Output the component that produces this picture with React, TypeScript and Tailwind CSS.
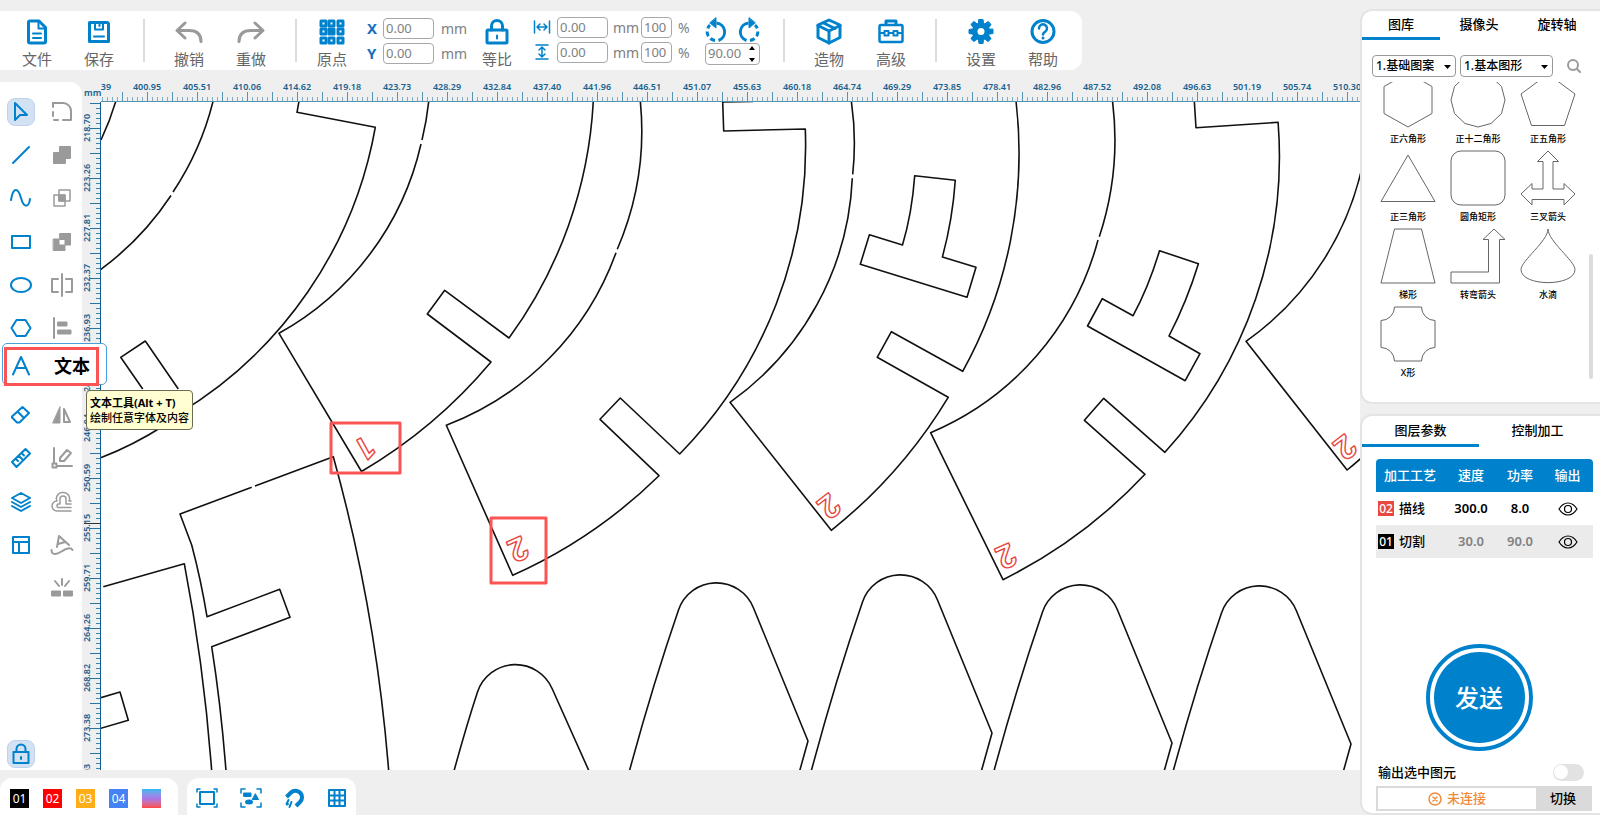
import React from 'react';

interface IconProps {
    w: number;
    h: number;
    children: React.ReactNode;
    stroke?: number;
    className?: string;
}

function Icon({ w, h, children, stroke = 2, className = 'text-[#0081cc]' }: IconProps) {
    return (
        <svg
            width={w}
            height={h}
            viewBox={`0 0 ${w} ${h}`}
            fill="none"
            stroke="currentColor"
            strokeWidth={stroke}
            strokeLinecap="round"
            strokeLinejoin="round"
            aria-hidden="true"
            className={`shrink-0 ${className}`}
        >
            {children}
        </svg>
    );
}

const gray = 'text-[#9a9a9a]';

/* ---------- top bar icons ---------- */

const fileIcon = (
    <Icon w={22} h={26} stroke={3}>
        <path d="M3.5 2h9.5l6.5 6.5V22.5a1.5 1.5 0 0 1-1.5 1.5H4a1.5 1.5 0 0 1-1.5-1.5V3.5A1.5 1.5 0 0 1 4 2z" />
        <path d="M12.5 3v6.5h6" strokeWidth={2} />
        <path d="M7 14.5h8M7 19h8" strokeWidth={2} />
    </Icon>
);
const saveIcon = (
    <Icon w={24} h={24} stroke={3}>
        <path d="M2.5 2.5h18l1 1v18h-19z" />
        <path d="M8 3v6.5h8V3M12.5 3v3" strokeWidth={2} />
        <path d="M7 16.5h10" strokeWidth={2} />
    </Icon>
);
const undoIcon = (
    <Icon w={28} h={22} stroke={3} className={gray}>
        <path d="M10 2 2 9.500l8 7.500M3 9.500h11c8 0 12 4 12 11" />
    </Icon>
);
const redoIcon = (
    <Icon w={28} h={22} stroke={3} className={gray}>
        <path d="m18 2 8 7.500-8 7.500M25 9.500H14c-8 0-12 4-12 11" />
    </Icon>
);
const originIcon = (
    <Icon w={26} h={26} stroke={3}>
        {[2, 10, 19].map((y) =>
            [2, 10, 19].map((x) => (
                <rect key={`${x}-${y}`} x={x} y={y} width="5" height="5" fill={x === 10 && y === 10 ? 'currentColor' : 'none'} />
            ))
        )}
    </Icon>
);
const lockIcon = (
    <Icon w={24} h={27} stroke={3}>
        <rect x="2" y="12" width="20" height="13" rx="1" />
        <path d="M6.500 12V8a5.500 5.500 0 0 1 11 0v4" />
        <path d="M12 17.500v3" strokeWidth={2} />
    </Icon>
);
const cubeIcon = (
    <Icon w={26} h={27} stroke={2}>
        <path d="M13 2 24 7v12.500L13 25 2 19.500V7z" strokeWidth={3} />
        <path d="M2 7.500 13 13l11-5.500M13 13v12M7.500 5 19 10.500" strokeWidth={3} />
    </Icon>
);
const toolboxIcon = (
    <Icon w={26} h={27} stroke={2}>
        <rect x="1.500" y="7" width="23" height="17" rx="1.500" strokeWidth={2.500} />
        <path d="M8 6V3h10v3" strokeWidth={3} />
        <path d="M2 15h4M11 15h4M20 15h4" />
        <rect x="6.500" y="13" width="4" height="4.500" />
        <rect x="15.500" y="13" width="4" height="4.500" />
    </Icon>
);
const gearIcon = (
    <Icon w={26} h={27} stroke={1}>
        {[0, 45, 90, 135].map((a) => (
            <path key={a} d="M11 1.500h4l.5 3v18l-.5 3h-4l-.5-3v-18z" fill="currentColor" transform={`rotate(${a} 13 13.500)`} />
        ))}
        <circle cx="13" cy="13.500" r="8.500" fill="currentColor" />
        <circle cx="13" cy="13.500" r="3.500" fill="#fff" stroke="none" />
    </Icon>
);
const helpIcon = (
    <Icon w={26} h={27} stroke={2}>
        <circle cx="13" cy="13.500" r="11" strokeWidth={3} />
        <path d="M9 10.500a4 4 0 1 1 6.500 3c-1.500 1-2.500 1.500-2.500 3" strokeWidth={2.500} />
        <circle cx="13" cy="20" r="1.500" fill="currentColor" stroke="none" />
    </Icon>
);

/* ---------- side bar icons ---------- */

const leftTools = [
    {
        name: '选择',
        icon: (
            <Icon w={20} h={22}>
                <path d="M4 2v17l5-5h7z" />
            </Icon>
        ),
    },
    {
        name: '直线',
        icon: (
            <Icon w={20} h={20}>
                <path d="M2 18 18 2" />
            </Icon>
        ),
    },
    {
        name: '曲线',
        icon: (
            <Icon w={22} h={20}>
                <path d="M1 12C3-1 8-1 11 10s8 9 9 1" />
            </Icon>
        ),
    },
    {
        name: '矩形',
        icon: (
            <Icon w={22} h={16}>
                <rect x="2" y="2" width="18" height="12" />
            </Icon>
        ),
    },
    {
        name: '椭圆',
        icon: (
            <Icon w={24} h={16}>
                <ellipse cx="12" cy="8" rx="10" ry="7" />
            </Icon>
        ),
    },
    {
        name: '多边形',
        icon: (
            <Icon w={22} h={20}>
                <path d="M6.500 2h9l5 8-5 8h-9l-5-8z" />
            </Icon>
        ),
    },
    null,
    {
        name: '橡皮擦',
        icon: (
            <Icon w={22} h={22}>
                <path d="M12.500 3 19 9l-9.500 9.500H7L2 13.500v-1zM8 8l6 6" />
            </Icon>
        ),
    },
    {
        name: '测量',
        icon: (
            <Icon w={22} h={22}>
                <path d="m2 15 13.500-13L20 6.500 6.500 20zM6 12l2 2M9 9l3 3M12 6.500l2 2" />
            </Icon>
        ),
    },
    {
        name: '图层',
        icon: (
            <Icon w={22} h={22}>
                <path d="m11 2 9 5-9 5-9-5zM2 11l9 5 9-5M2 15l9 5 9-5" />
            </Icon>
        ),
    },
    {
        name: '布局',
        icon: (
            <Icon w={20} h={20}>
                <path d="M2 2h16v16H2zM2 7h16M8 7v11" />
            </Icon>
        ),
    },
    null,
];

const rightTools = [
    {
        name: '圆角',
        icon: (
            <Icon w={22} h={22} className={gray}>
                <path d="M2 2h10a8 8 0 0 1 8 8v9h-3" />
                <path d="M2 2v17h16" strokeDasharray="4 5" />
            </Icon>
        ),
    },
    {
        name: '并集',
        icon: (
            <Icon w={20} h={20} className={gray}>
                <path d="M8 2h10v11h-5v5H2V8h6z" fill="currentColor" />
            </Icon>
        ),
    },
    {
        name: '交集',
        icon: (
            <Icon w={20} h={20} className={gray} stroke={1}>
                <path d="M7 2h11v11H7zM2 7h11v11H2z" strokeWidth={1.500} />
                <path d="M7 7h6v6H7z" fill="currentColor" />
            </Icon>
        ),
    },
    {
        name: '差集',
        icon: (
            <Icon w={20} h={20} className={gray} stroke={1}>
                <path d="M8 1.500h10.500V13H13V7.500H8zM1.500 7H7v6h6v5.500H1.500z" fill="currentColor" />
            </Icon>
        ),
    },
    {
        name: '打断',
        icon: (
            <Icon w={24} h={24} className={gray}>
                <path d="M12 1v22M8 6H2v13h6M16 6h6v13h-6" />
            </Icon>
        ),
    },
    {
        name: '对齐',
        icon: (
            <Icon w={20} h={22} className={gray}>
                <path d="M2 1v20" />
                <path d="M6 5h9v4H6zM6 13h13v4H6z" fill="currentColor" strokeWidth={1} />
            </Icon>
        ),
    },
    null,
    {
        name: '镜像',
        icon: (
            <Icon w={20} h={18} className={gray}>
                <path d="M8 1v16H1z" fill="currentColor" strokeWidth={1} />
                <path d="M12 3v13h6z" />
            </Icon>
        ),
    },
    {
        name: '路径编辑',
        icon: (
            <Icon w={22} h={22} className={gray}>
                <path d="M3 1v15M7 19h14M1.500 16.500h4v4h-4zM9 11l7-8 4 3-7 8H9z" />
            </Icon>
        ),
    },
    {
        name: '偏移',
        icon: (
            <Icon w={22} h={22} className={gray}>
                <path d="M20 20H6A5 5 0 0 1 6 10a6 6 0 0 1 6-8.500 6 6 0 0 1 6 8.500h2" strokeWidth={1.500} />
                <path d="M20 16.500H7a2 2 0 0 1 0-3.500h2V8a3 3 0 0 1 6 0v5h5" strokeWidth={1.500} />
            </Icon>
        ),
    },
    {
        name: '文本路径',
        icon: (
            <Icon w={24} h={22} className={gray}>
                <path d="m7 13 2-11 10 9M8 10l7-2" />
                <path d="M1.500 16c0 6 6 4 10 1.500s9-5 11-1.500" />
            </Icon>
        ),
    },
    {
        name: '打散',
        icon: (
            <Icon w={22} h={20} className={gray}>
                <path d="M1 13.500h8v4H1zM13 13.500h8v4h-8z" fill="currentColor" />
                <path d="M11 1v6M4 3l4 5M18 3l-4 5" />
            </Icon>
        ),
    },
];

/* ---------- top bar ---------- */

function ToolButton({ label, icon, narrow }: { label: string; icon: React.ReactNode; narrow?: boolean }) {
    return (
        <button type="button" className={`flex flex-col items-center pt-[5px] ${narrow ? 'w-[44px]' : 'w-[62px]'}`}>
            <span className="flex h-[28px] items-center">{icon}</span>
            <span className="mt-[3px] text-[15px] leading-[20px] text-[#666]">{label}</span>
        </button>
    );
}

function Divider() {
    return <span className="mx-[13px] h-[43px] w-[2px] bg-[#dcdcdc]" />;
}

function NumberBox({ id, value, label, small }: { id: string; value: string; label: string; small?: boolean }) {
    return (
        <input
            id={id}
            aria-label={label}
            defaultValue={value}
            className={`h-[21px] rounded-[4px] border border-[#a8a8a8] bg-white px-[2px] text-[13px] text-[#808080] ${small ? 'w-[31px]' : 'w-[51px]'}`}
        />
    );
}

function TopBar() {
    return (
        <header className="flex h-[59px] w-fit items-center rounded-r-xl bg-white pr-[8px] pl-[6px]">
            <ToolButton label="文件" icon={fileIcon} />
            <ToolButton label="保存" icon={saveIcon} />
            <Divider />
            <ToolButton label="撤销" icon={undoIcon} />
            <ToolButton label="重做" icon={redoIcon} />
            <Divider />
            <ToolButton label="原点" icon={originIcon} narrow />
            <div className="ml-[13px] flex flex-col gap-[4px] text-[14px] leading-[21px] text-[#808080]">
                <div className="flex">
                    <label htmlFor="pos-x" className="w-[16px] text-[15px] font-bold text-[#1671bd]">X</label>
                    <NumberBox id="pos-x" value="0.00" label="X" />
                    <span className="ml-[7px] w-[23px]">mm</span>
                </div>
                <div className="flex">
                    <label htmlFor="pos-y" className="w-[16px] text-[15px] font-bold text-[#1671bd]">Y</label>
                    <NumberBox id="pos-y" value="0.00" label="Y" />
                    <span className="ml-[7px] w-[23px]">mm</span>
                </div>
            </div>
            <div className="ml-[11px]">
                <ToolButton label="等比" icon={lockIcon} narrow />
            </div>
            <div className="ml-[14px] flex flex-col gap-[4px] pb-[2px] text-[14px] leading-[21px] text-[#808080]">
                <div className="flex items-center">
                    <Icon w={18} h={14} stroke={1}>
                        <path d="M1.500 1v12M16.500 1v12M4 7h10M7 4 4 7l3 3M11 4l3 3-3 3" strokeWidth={1.500} />
                    </Icon>
                    <span className="ml-[6px] flex">
                        <NumberBox id="size-w" value="0.00" label="宽度" />
                    </span>
                    <span className="ml-[5px] w-[28px]">mm</span>
                    <NumberBox id="scale-w" value="100" label="宽度比例" small />
                    <span className="ml-[6px] w-[14px]">%</span>
                </div>
                <div className="flex items-center">
                    <Icon w={18} h={16} stroke={1}>
                        <path d="M3 1h12M3 15h12M9 3v10M6 6l3-3 3 3M6 10l3 3 3-3" strokeWidth={1.500} />
                    </Icon>
                    <span className="ml-[6px] flex">
                        <NumberBox id="size-h" value="0.00" label="高度" />
                    </span>
                    <span className="ml-[5px] w-[28px]">mm</span>
                    <NumberBox id="scale-h" value="100" label="高度比例" small />
                    <span className="ml-[6px] w-[14px]">%</span>
                </div>
            </div>
            <div className="ml-[13px] flex w-[55px] flex-col">
                <div className="flex justify-between">
                    <button type="button" aria-label="逆时针旋转">
                        <Icon w={23} h={26} stroke={3}>
                            <path d="M11.500 6a9 9 0 0 1 2 17.500" strokeLinecap="butt" />
                            <path d="M10 23.500A9 9 0 0 1 5 8" strokeDasharray="5 3" strokeLinecap="butt" />
                            <path d="M11 1v10L5 6z" fill="currentColor" strokeWidth={1} />
                        </Icon>
                    </button>
                    <button type="button" aria-label="顺时针旋转">
                        <Icon w={23} h={26} stroke={3}>
                            <path d="M11.500 6a9 9 0 0 0-2 17.500" strokeLinecap="butt" />
                            <path d="M13 23.500a9 9 0 0 0 5-15.500" strokeDasharray="5 3" strokeLinecap="butt" />
                            <path d="M12 1v10l6-5z" fill="currentColor" strokeWidth={1} />
                        </Icon>
                    </button>
                </div>
                <div className="flex h-[22px] items-center rounded-[4px] border border-[#a8a8a8] pr-[4px]">
                    <input aria-label="旋转角度" defaultValue="90.00" className="w-full min-w-0 pl-[2px] text-[13px] text-[#808080]" />
                    <span className="flex flex-col gap-[8px] text-black">
                        <button type="button" aria-label="增加">
                            <svg width="6" height="4" viewBox="0 0 6 4" className="block"><path d="M0 4 3 0l3 4z" /></svg>
                        </button>
                        <button type="button" aria-label="减少">
                            <svg width="6" height="4" viewBox="0 0 6 4" className="block"><path d="m0 0 3 4 3-4z" /></svg>
                        </button>
                    </span>
                </div>
            </div>
            <span className="w-[10px]" />
            <Divider />
            <ToolButton label="造物" icon={cubeIcon} />
            <ToolButton label="高级" icon={toolboxIcon} />
            <Divider />
            <ToolButton label="设置" icon={gearIcon} />
            <ToolButton label="帮助" icon={helpIcon} />
        </header>
    );
}

/* ---------- side bar ---------- */

function SideBar() {
    return (
        <aside className="relative z-10 mt-1 flex w-[82px] shrink-0 flex-col justify-between rounded-tr-xl bg-white pt-2 pb-[2px]">
            <div className="grid h-[520px] grid-cols-2 grid-rows-12">
                {leftTools.map((left, i) => {
                    const right = rightTools[i];
                    return (
                        <React.Fragment key={i}>
                            <div className="flex items-center justify-center">
                                {left && (
                                    <button
                                        type="button"
                                        aria-label={left.name}
                                        className={`flex h-7 w-7 items-center justify-center rounded-lg ${i === 0 ? 'border border-[#bfd2ea] bg-[#d3e2f3]' : ''}`}
                                    >
                                        {left.icon}
                                    </button>
                                )}
                            </div>
                            <div className="flex items-center justify-center">
                                {right && (
                                    <button type="button" aria-label={right.name}>
                                        {right.icon}
                                    </button>
                                )}
                            </div>
                        </React.Fragment>
                    );
                })}
            </div>
            <div className="flex w-[41px] justify-center">
                <button type="button" aria-label="锁定" className="flex h-7 w-7 items-center justify-center rounded-lg border border-[#bfd2ea] bg-[#d3e2f3]">
                    <Icon w={18} h={22}>
                        <rect x="1.500" y="9" width="15" height="11" />
                        <path d="M4.500 9V6a4.500 4.500 0 0 1 9 0v3M9 14v2" />
                    </Icon>
                </button>
            </div>

            {/* Expanded text tool */}
            <button type="button" className="absolute top-[261px] left-[2px] h-[42px] w-[105px] rounded-[5px] border border-[#47a0db] bg-white">
                <span className="mt-[3px] ml-[1px] flex h-[39px] w-[95px] items-center border-[3px] border-[#fb5454] pb-[2px] pl-[5px]">
                    <Icon w={18} h={20}>
                        <path d="M1 18.500 9 1l8 17.500M4 12h10" />
                    </Icon>
                    <span className="ml-[24px] text-[18px] leading-[24px] font-bold text-black">文本</span>
                </span>
            </button>
            <div role="tooltip" className="absolute top-[308px] left-[86px] w-max rounded-[4px] border border-[#6b6b55] bg-[#ffffd2] px-[3px] py-[4px] text-[11px] leading-[15px] text-black">
                <p className="font-bold">文本工具(Alt + T)</p>
                <p className="font-medium">绘制任意字体及内容</p>
            </div>
        </aside>
    );
}

/* ---------- rulers and drawing area ---------- */

const hLabels = [
    '39', '400.95', '405.51', '410.06', '414.62', '419.18', '423.73', '428.29', '432.84', '437.40', '441.96', '446.51', '451.07',
    '455.63', '460.18', '464.74', '469.29', '473.85', '478.41', '482.96', '487.52', '492.08', '496.63', '501.19', '505.74', '510.30',
];
const vLabels = [
    '218.70', '223.26', '227.81', '232.37', '236.93', '241.48', '246.04', '250.59', '255.15', '259.71', '264.26', '268.82', '273.38', '277.93',
];

function TopRuler() {
    return (
        <svg width="100%" height="24" className="block">
            <defs>
                <pattern id="h-ticks" x="21" width="25" height="24" patternUnits="userSpaceOnUse">
                    <path d="M.5 14v10" stroke="#5593b5" />
                    <path d="M5.500 19v5M10.500 19v5M15.500 19v5M20.500 19v5" stroke="#7fafc8" />
                </pattern>
            </defs>
            <rect width="100%" height="24" fill="url(#h-ticks)" />
            <rect y="23" width="100%" height="1" fill="#5593b5" />
            {hLabels.map((t, i) => (
                <text key={t} x={i === 0 ? 5 : 50 * i - 4} y="12" textAnchor="middle" className="fill-[#17628f] text-[9px] font-semibold">
                    {t}
                </text>
            ))}
        </svg>
    );
}

function SideRuler() {
    return (
        <svg width="21" height="100%" className="block">
            <defs>
                <pattern id="v-ticks" y="1" width="21" height="25" patternUnits="userSpaceOnUse">
                    <path d="M10 .5h11" stroke="#2775a3" />
                    <path d="M16 5.500h5M16 10.500h5M16 15.500h5M16 20.500h5" stroke="#3f86ae" />
                </pattern>
            </defs>
            <rect width="21" height="100%" fill="url(#v-ticks)" />
            <rect x="20" width="1" height="100%" fill="#0f5f93" />
            {vLabels.map((t, i) => (
                <text key={t} transform={`translate(10 ${26 + 50 * i}) rotate(-90)`} textAnchor="middle" className="fill-[#17628f] text-[9px] font-semibold">
                    {t}
                </text>
            ))}
            <path d="M4 421.500h17" stroke="#333" />
        </svg>
    );
}

const outlines = [
    'M115.700 101.500Q110 121 101 140',
    'M213 101.500A290 290 0 0 1 173 192M171 195.500A290 290 0 0 1 100 270',
    'M299 101L297 112.300 375.300 127.300A420 420 0 0 1 178 414',
    'M142.700 389 120.700 357.300 145.300 341 178.300 389',
    'M165 425Q132 446 100 458',
    'M428.700 101.500A290 290 0 0 1 422 140M421 144A290 290 0 0 1 279 333.300L361.500 471.500A500 500 0 0 0 491 362L427.300 314 444.700 290.300 509 338A440 440 0 0 0 593.300 101',
    'M640.300 101A300 300 0 0 1 617.300 249.300M616 252.700A290 290 0 0 1 446.300 425.300L512.700 575.300A500 500 0 0 0 659 475.700L600 419.300 620.300 398 679.700 454A440 440 0 0 0 805.300 129L723.700 131 722.700 102 753 101.500',
    'M851.300 101A290 290 0 0 1 852.700 174.300M852.300 178.300A290 290 0 0 1 730 402.300L831.300 530.300A500 500 0 0 0 948.200 397.300L877.200 357.300 891.400 331.700 962.700 371.300A450 450 0 0 0 1016 101',
    'M914.700 175.700 955.300 180.300Q952.500 220 942.400 257L976 267.300 967 297.300 860.300 264.300 869.400 234.700 902.500 245Q912 213 914.700 175.700Z',
    'M1112.500 101A310 310 0 0 1 1099.300 236.700M1098 240A290 290 0 0 1 930.600 432.700L1003 579.700A500 500 0 0 0 1145 474.300L1084.400 420.300 1103.700 398.300 1164.900 452.300A440 440 0 0 0 1278.100 122.300L1196 127.700 1194.300 101',
    'M1159.500 250.700 1198.400 263.700Q1187 301 1169 336L1200 353.700 1185.200 380.700 1087.500 326 1102.300 298.700 1133.100 315.700Q1149 286 1159.500 250.700Z',
    'M1365 152A290 290 0 0 1 1246 341.300L1347.100 470Q1362 458 1375 445',
    'M251.700 487.300 180 514 191.700 545Q201 580 207 616.700L279.700 589.300 290 617.300 211.700 646.700Q221 706 226 771',
    'M255 486 333.300 456.700Q376 610 388.700 771',
    'M103.300 586.700 184.300 563.700Q204 666 211.700 771',
    'M100 698 120 692 128.300 720.300 100 728.500',
    'M454 771Q466 727 477.500 692A40 40 0 0 1 552.300 689L589 771',
];

const arches = [
    [716, 584],
    [900, 576],
    [1080, 586],
    [1259, 587],
];

const marks = [
    { x: 365, y: 448, angle: 151, digit: '1' },
    { x: 518, y: 549, angle: 156, digit: '2' },
    { x: 829, y: 506, angle: 142, digit: '2' },
    { x: 1006, y: 556, angle: 156, digit: '2' },
    { x: 1345, y: 447, angle: 142, digit: '2' },
];

function Drawing() {
    return (
        <svg width="100%" height="100%" className="block bg-white">
            <g transform="translate(-101 -102)" fill="none" stroke="#111" strokeWidth="1.600" strokeLinejoin="round">
                {outlines.map((d) => (
                    <path key={d} d={d} />
                ))}
                {arches.map(([x, y]) => (
                    <path key={x} transform={`translate(${x} ${y})`} d="M-89 196Q-65 106-37.500 26A40 40 0 0 1 37.500 24L92 157 80 200" />
                ))}
                {marks.map((m) => (
                    <text
                        key={m.x}
                        transform={`translate(${m.x} ${m.y}) rotate(${m.angle})`}
                        y="11"
                        textAnchor="middle"
                        stroke="#e8483f"
                        strokeWidth="1.400"
                        className="font-[Roboto] text-[32px] font-bold"
                    >
                        {m.digit}
                    </text>
                ))}
                <rect x="331" y="423" width="69" height="50" stroke="#fb5454" strokeWidth="3" />
                <rect x="491" y="518" width="55" height="65" stroke="#fb5454" strokeWidth="3" />
            </g>
        </svg>
    );
}

function Workspace() {
    return (
        <main className="-ml-[2px] grid min-w-0 flex-1 grid-cols-[21px_minmax(0,1fr)] grid-rows-[24px_minmax(0,1fr)]">
            <span className="self-end pl-[4px] text-[9px] leading-[18px] font-semibold text-[#17628f]">mm</span>
            <TopRuler />
            <div className="overflow-hidden">
                <SideRuler />
            </div>
            <div className="overflow-hidden">
                <Drawing />
            </div>
        </main>
    );
}

/* ---------- bottom bar ---------- */

function BottomBar() {
    const swatch = 'h-[19px] w-[19px] text-[12px] leading-[19px] text-white';
    return (
        <footer className="flex h-[45px] gap-[9px] pt-2">
            <div className="flex w-[178px] gap-[14px] rounded-t-xl bg-white pt-[11px] pl-[10px]">
                <button type="button" className={`${swatch} bg-black`}>01</button>
                <button type="button" className={`${swatch} bg-[#ff0000]`}>02</button>
                <button type="button" className={`${swatch} bg-[#ffae17]`}>03</button>
                <button type="button" className={`${swatch} bg-[#4582f5]`}>04</button>
                <button type="button" aria-label="渐变" className={`${swatch} bg-linear-to-b from-[#22b8ee] via-[#a777e8] to-[#ff4545]`} />
            </div>
            <div className="flex w-[169px] items-start justify-between rounded-t-xl bg-white px-[9px] pt-[10px]">
                <button type="button" aria-label="适应画布">
                    <Icon w={22} h={20}>
                        <rect x="4" y="4" width="14" height="12" />
                        <path d="M1 4V1h3M18 1h3v3M21 16v3h-3M4 19H1v-3" strokeWidth={1.500} />
                    </Icon>
                </button>
                <button type="button" aria-label="适应图形">
                    <Icon w={22} h={20}>
                        <path d="M1 5V1h4M17 1h4v4M21 15v4h-4M5 19H1v-4" strokeWidth={1.500} />
                        <path d="M4 5h7v3.500H4zM15.500 6l3 5.500h-6z" fill="currentColor" strokeWidth={1} />
                        <ellipse cx="9" cy="14" rx="4" ry="2.500" fill="currentColor" stroke="none" />
                    </Icon>
                </button>
                <button type="button" aria-label="吸附">
                    <Icon w={22} h={22} stroke={4}>
                        <path d="M3.500 9 8 4.500a6.500 6.500 0 0 1 9 9.500l-4 4" strokeLinecap="butt" />
                        <path d="m5.500 12-2 4M8.500 14l-2 5M4 16.500l1-.5" strokeWidth={2} />
                    </Icon>
                </button>
                <button type="button" aria-label="网格">
                    <Icon w={20} h={20}>
                        <path d="M2 2h16v16H2zM2 7.500h16M2 12.500h16M7.500 2v16M12.500 2v16" />
                    </Icon>
                </button>
            </div>
        </footer>
    );
}

/* ---------- right panels ---------- */

const shapes = [
    { name: '正六角形', d: 'M27 0 51 13.500v27L27 54 3 40.500v-27z' },
    { name: '正十二角形', d: 'M27 0 40 3.500 50.500 13.500 54 27 50.500 40.500 40 50.500 27 54 14 50.500 3.500 40.500 0 27 3.500 13.500 14 3.500z' },
    { name: '正五角形', d: 'M27 1 54 21 43.500 52.500h-33L0 21z' },
    { name: '正三角形', d: 'M27 4 54 50.500H0z' },
    { name: '圆角矩形', d: 'M10 0h34a10 10 0 0 1 10 10v34a10 10 0 0 1-10 10H10A10 10 0 0 1 0 44V10A10 10 0 0 1 10 0z' },
    { name: '三叉箭头', d: 'M27 0 37.500 10.500H32V38h11v-5.500L54 43 43 54v-5.500H11V54L0 43l11-10.500V38h11V10.500h-5.500z' },
    { name: '梯形', d: 'M13.500 0h27L54 54H0z' },
    { name: '转弯箭头', d: 'M43 0 54 10.500h-5.500V54H0V43h37.500V10.500H32z' },
    { name: '水滴', d: 'M27 0C27 12 0 32 0 40.500 0 58 54 58 54 40.500 54 32 27 12 27 0z' },
    { name: 'X形', d: 'M13.500 0h27A13.500 13.500 0 0 0 54 13.500v27A13.500 13.500 0 0 0 40.500 54h-27A13.500 13.500 0 0 0 0 40.500v-27A13.500 13.500 0 0 0 13.500 0z' },
];

function Picker({ label, value, wide }: { label: string; value: string; wide?: boolean }) {
    return (
        <div className={`relative ${wide ? 'w-[93px]' : 'w-[84px]'}`}>
            <select aria-label={label} className="block h-[22px] w-full appearance-none rounded-[4px] border border-[#999] bg-white pl-[3px] text-[12px] leading-[20px] font-medium text-black">
                <option>{value}</option>
            </select>
            <svg width="7" height="4" viewBox="0 0 7 4" className="pointer-events-none absolute top-[10px] right-[5px]" aria-hidden="true">
                <path d="M0 0h7L3.500 4z" />
            </svg>
        </div>
    );
}

function GalleryPanel() {
    return (
        <section className="h-[395px] shrink-0 rounded-l-xl border-2 border-r-0 border-[#e4e4e4] bg-white">
            <nav className="mr-1 grid grid-cols-3 text-[13px] leading-[26px] font-medium text-black">
                <button type="button" className="border-b-[3px] border-[#0081cc]">图库</button>
                <button type="button" className="border-b-[3px] border-transparent">摄像头</button>
                <button type="button" className="border-b-[3px] border-transparent">旋转轴</button>
            </nav>
            <div className="mt-[15px] ml-[10px] flex items-center gap-[4px]">
                <Picker label="图案分类" value="1.基础图案" />
                <Picker label="图形分类" value="1.基本图形" wide />
                <button type="button" aria-label="搜索" className="ml-[9px]">
                    <Icon w={16} h={16} className={gray}>
                        <circle cx="7" cy="7" r="5" />
                        <path d="m11 11 3 3" />
                    </Icon>
                </button>
            </div>
            <div className="mt-[5px] mr-[7px] ml-[11px] flex h-[300px] justify-between overflow-hidden">
                <div className="flex flex-col justify-end">
                    <ul className="grid grid-cols-[70px_70px_70px]">
                        {shapes.map((s) => (
                            <li key={s.name} className="flex flex-col items-center pt-[3px]">
                                <svg width="56" height="54" viewBox="-1 0 56 54" className="overflow-visible" aria-hidden="true">
                                    <path d={s.d} fill="none" stroke="#666" />
                                </svg>
                                <span className="mt-[3px] text-[9px] leading-[18px] font-medium text-black">{s.name}</span>
                            </li>
                        ))}
                    </ul>
                </div>
                <span className="mb-[3px] h-[125px] w-[4px] self-end rounded-full bg-[#dcdcdc]" />
            </div>
        </section>
    );
}

const layers = [
    { no: '02', color: 'bg-[#e8483f]', name: '描线', speed: '300.0', power: '8.0', row: 'bg-white', num: 'text-black' },
    { no: '01', color: 'bg-black', name: '切割', speed: '30.0', power: '90.0', row: 'bg-[#ebebeb]', num: 'text-[#808080]' },
];

function LayerPanel() {
    return (
        <section className="flex flex-1 flex-col rounded-l-xl border-2 border-r-0 border-[#e4e4e4] bg-white">
            <nav className="mr-1 grid grid-cols-2 text-[13px] leading-[28px] font-medium text-black">
                <button type="button" className="border-b-[3px] border-[#0081cc]">图层参数</button>
                <button type="button" className="border-b-[3px] border-transparent">控制加工</button>
            </nav>
            <div className="mt-[12px] mr-[7px] ml-[14px] overflow-hidden rounded-t-[4px]">
                <table className="w-full table-fixed text-[13px] font-medium text-black">
                    <colgroup>
                        <col className="w-[68px]" />
                        <col className="w-[54px]" />
                        <col className="w-[44px]" />
                        <col />
                    </colgroup>
                    <thead className="bg-[#0081cc] text-white">
                        <tr className="h-[33px]">
                            <th className="font-medium">加工工艺</th>
                            <th className="font-medium">速度</th>
                            <th className="font-medium">功率</th>
                            <th className="font-medium">输出</th>
                        </tr>
                    </thead>
                    <tbody>
                        {layers.map((l) => (
                            <tr key={l.no} className={`h-[33px] ${l.row}`}>
                                <td>
                                    <span className="flex items-center gap-[5px] pl-[2px]">
                                        <span className={`h-[15px] w-[16px] text-center text-[12px] leading-[15px] text-white ${l.color}`}>{l.no}</span>
                                        {l.name}
                                    </span>
                                </td>
                                <td className={`text-center font-semibold ${l.num}`}>{l.speed}</td>
                                <td className={`text-center font-semibold ${l.num}`}>{l.power}</td>
                                <td>
                                    <button type="button" aria-label="输出" className="mx-auto block">
                                        <Icon w={20} h={14} className="text-black" stroke={1}>
                                            <path d="M1 7c5-8 13-8 18 0-5 8-13 8-18 0z" strokeWidth={1.200} />
                                            <circle cx="10" cy="7" r="3.500" strokeWidth={1.200} />
                                        </Icon>
                                    </button>
                                </td>
                            </tr>
                        ))}
                    </tbody>
                </table>
            </div>
            <div className="mt-auto flex justify-center pr-[4px]">
                <button type="button" className="h-[107px] w-[107px] rounded-full border-4 border-[#0081cc] bg-white p-[4px]">
                    <span className="flex h-full w-full items-center justify-center rounded-full bg-[#0081cc] text-[24px] font-medium text-white">发送</span>
                </button>
            </div>
            <div className="mt-[11px] mr-[16px] ml-[16px] flex items-center justify-between">
                <label htmlFor="only-selected" className="text-[13px] leading-[20px] font-medium text-black">输出选中图元</label>
                <input
                    id="only-selected"
                    type="checkbox"
                    role="switch"
                    className="flex h-[17px] w-[31px] appearance-none items-center rounded-full bg-[#e2e2e2] pl-px before:h-[14px] before:w-[14px] before:rounded-full before:bg-white before:content-['']"
                />
            </div>
            <div className="mt-[4px] mr-[8px] mb-[2px] ml-[14px] flex h-[25px] border-2 border-[#dadada] bg-[#dadada] text-[13px] font-medium">
                <div role="status" className="flex flex-1 items-center justify-center gap-[5px] bg-white text-[#f08b3c]">
                    <Icon w={14} h={14} className="text-[#f08b3c]" stroke={1}>
                        <circle cx="7" cy="7" r="6" strokeWidth={1.500} />
                        <path d="m5 5 4 4M9 5l-4 4" strokeWidth={1.500} />
                    </Icon>
                    未连接
                </div>
                <button type="button" className="w-[54px] text-black">切换</button>
            </div>
        </section>
    );
}

export default function App() {
    return (
        <div className="flex h-screen overflow-hidden bg-[#efefef] font-['Noto_Sans','Noto_Sans_CJK_SC',sans-serif]">
            <div className="flex min-w-0 flex-1 flex-col pt-[11px]">
                <TopBar />
                <div className="mt-2 flex min-h-0 flex-1">
                    <SideBar />
                    <Workspace />
                </div>
                <BottomBar />
            </div>
            <div className="flex w-[240px] shrink-0 flex-col gap-[10px] bg-[#efefef] pt-[9px]">
                <GalleryPanel />
                <LayerPanel />
            </div>
        </div>
    );
}
